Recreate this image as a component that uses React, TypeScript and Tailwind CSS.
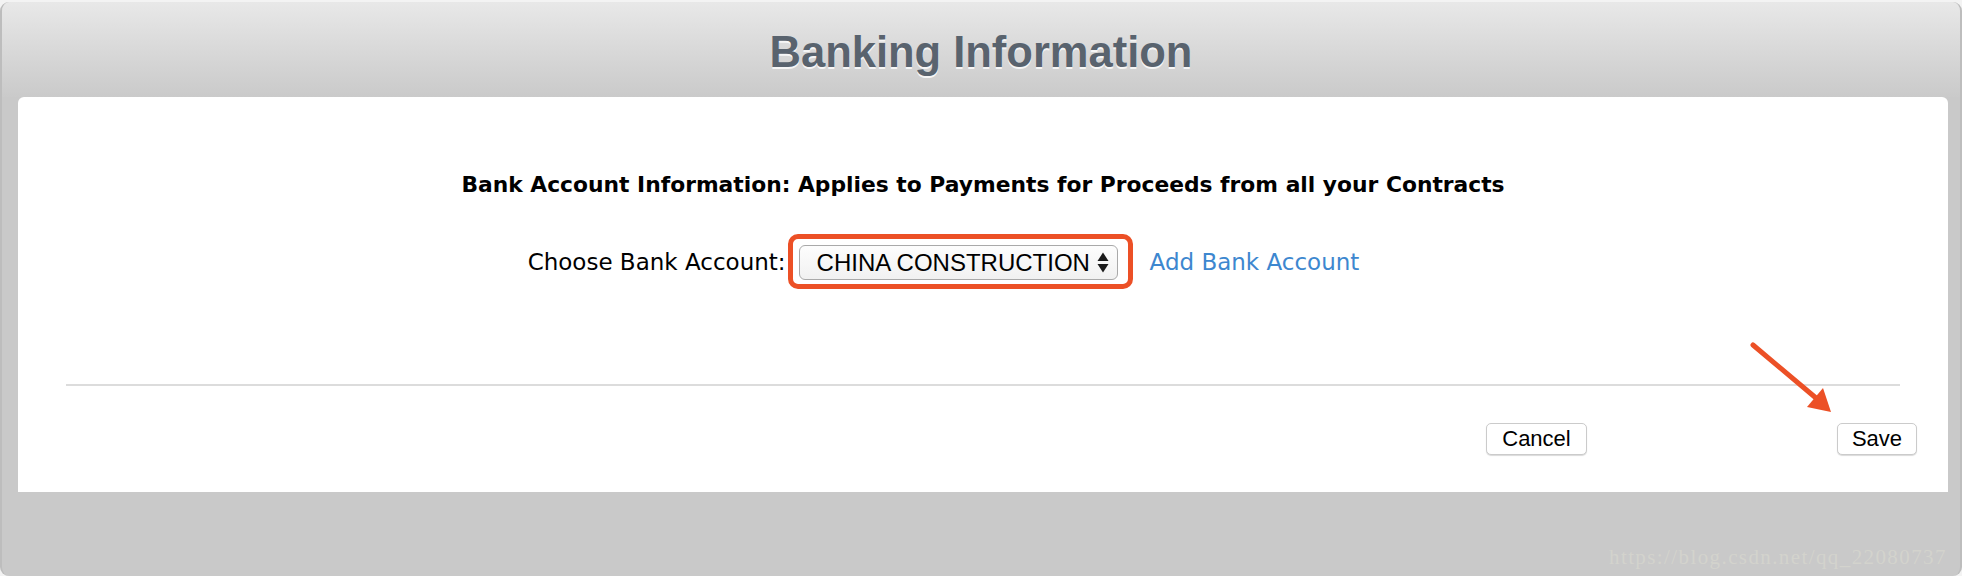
import React from "react";

const sans = { fontFamily: '"Liberation Sans", Arial, sans-serif' };
const lucida = { fontFamily: '"DejaVu Sans", "Liberation Sans", sans-serif' };

export default function App() {
  return (
    <div className="relative w-[1962px] h-[576px] bg-[#f3f3f3] overflow-hidden">
      <div className="mt-[2px] h-[574px] flex flex-col rounded-[9px] border-x-2 border-[#bdbdbd] bg-[#c9c9c9] overflow-hidden">
        {/* header */}
        <div className="h-[95px] shrink-0 bg-linear-to-b from-[#e8e8e8] to-[#cacaca] pt-[25px] text-center">
          <h1
            className="text-[43.5px] font-bold leading-[50px] text-[#59636e] [text-shadow:0_2px_0_#f6f6f6]"
            style={sans}
          >
            Banking Information
          </h1>
        </div>

        {/* panel */}
        <div className="pl-[16px] pr-[12px]">
          <div className="h-[395px] rounded-t-[6px] bg-white flex flex-col">
            <h2
              className="pt-[75px] text-center text-[21.8px] font-bold leading-[26px] text-black"
              style={lucida}
            >
              Bank Account Information: Applies to Payments for Proceeds from all your Contracts
            </h2>

            <div className="mt-[36px] h-[55px] flex items-center justify-center pr-[79px]">
              <span className="text-[23px] leading-[28px] text-black mr-[2px]" style={lucida}>
                Choose Bank Account:
              </span>
              <div className="h-[55px] border-[5px] border-[#ec5026] rounded-[10px] pl-[6px] pr-[10px] pt-[6px] pb-[4px]">
                <div className="w-[319px] h-[35px] flex items-center rounded-[6px] border-[1.5px] border-[#a9a9a9] bg-linear-to-b from-[#fdfdfd] to-[#f1f1f1] pl-[17px] pr-[8px]">
                  <span className="text-[24px] leading-[26px] text-black" style={sans}>
                    CHINA CONSTRUCTION
                  </span>
                  <svg className="ml-auto" width="12" height="21" viewBox="0 0 12 21">
                    <polygon points="6,0.5 11.5,9 0.5,9" fill="#1b1b1b" />
                    <polygon points="0.5,12 11.5,12 6,20.5" fill="#1b1b1b" />
                  </svg>
                </div>
              </div>
              <a className="ml-[17px] text-[23px] leading-[28px] text-[#3d87cf]" style={lucida}>
                Add Bank Account
              </a>
            </div>

            <div className="mt-[95px] mx-[48px] h-[2px] bg-[#dcdcdc]" />

            <div className="mt-[37px] flex justify-end pr-[31px]">
              <button
                className="w-[101px] h-[32px] mr-[250px] rounded-[5px] border border-[#cbcbcb] bg-white text-[22px] leading-[30px] text-black shadow-[0_1px_1px_rgba(0,0,0,0.15)]"
                style={sans}
              >
                Cancel
              </button>
              <button
                className="w-[80px] h-[32px] rounded-[5px] border border-[#cbcbcb] bg-white text-[22px] leading-[30px] text-black shadow-[0_1px_1px_rgba(0,0,0,0.15)]"
                style={sans}
              >
                Save
              </button>
            </div>
          </div>
        </div>
      </div>

      {/* annotation arrow */}
      <svg className="absolute left-[1740px] top-[335px]" width="100" height="85" viewBox="0 0 100 85">
        <line x1="13" y1="10" x2="76" y2="63" stroke="#ec5026" strokeWidth="5" strokeLinecap="round" />
        <polygon points="91,77 67,72 83,53" fill="#ec5026" />
      </svg>

      {/* watermark */}
      <div
        className="absolute left-[1609px] top-[547px] text-[21px] leading-[21px] tracking-[1.4px] text-[#d3d3cd] whitespace-nowrap"
        style={{ fontFamily: '"Liberation Serif", "Times New Roman", serif' }}
      >
        https://blog.csdn.net/qq_22080737
      </div>
    </div>
  );
}
